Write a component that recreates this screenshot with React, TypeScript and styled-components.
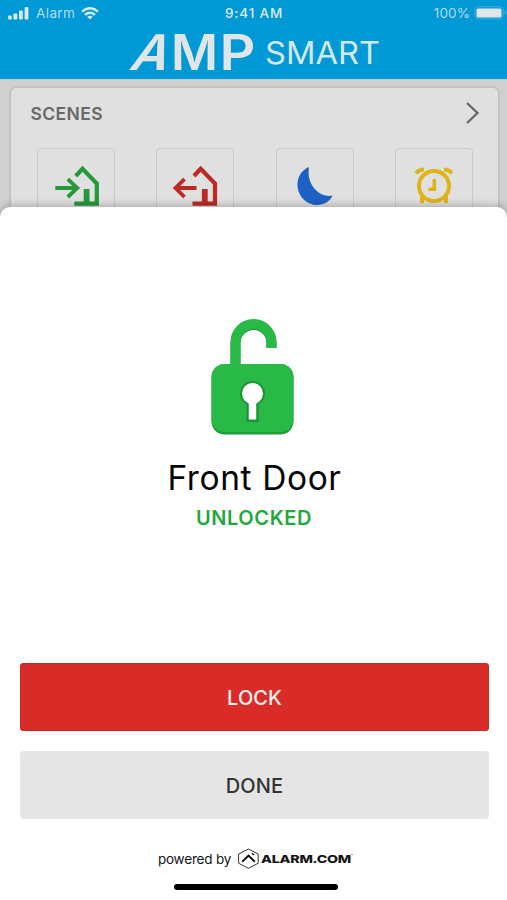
import React from "react";
import styled, { createGlobalStyle } from "styled-components";

const GlobalStyle = createGlobalStyle`
  * { box-sizing: border-box; }
  body { margin: 0; background: #d1d0cf; }
  button { border: 0; padding: 0; font: inherit; }
  svg { display: block; flex: none; }
`;

const Screen = styled.main`
  position: relative;
  width: 507px;
  height: 900px;
  overflow: hidden;
  display: flex;
  flex-direction: column;
  background: #d1d0cf;
  font-family: Inter, "Liberation Sans", sans-serif;
`;

const Header = styled.header`
  height: 80px;
  flex: none;
  background: #0099d6;
  border-bottom: 1px solid #a9cfda;
`;

const StatusBar = styled.div`
  height: 26px;
  padding: 0 0 0 8px;
  display: grid;
  grid-template-columns: 217px 1fr auto;
  align-items: center;
  color: #d9eaf1;
  font-size: 13.5px;
`;

const StatusGroup = styled.div`
  display: flex;
  align-items: center;
`;

const Carrier = styled.span`
  margin: 0 6px 0 7px;
  letter-spacing: 0.4px;
  color: #b5dceb;
`;

const Clock = styled.span`
  font-weight: 500;
  font-size: 13.5px;
  letter-spacing: 0.85px;
`;

const Percent = styled.span`
  margin-right: 4px;
  color: #b5dceb;
  letter-spacing: 0.1px;
`;

const Brand = styled.div`
  padding-left: 127px;
`;

const ScenesCard = styled.section`
  margin: 8px 9px 0 11px;
  height: 150px;
  border-radius: 5px 5px 0 0;
  background: #e0e0e0;
  box-shadow: 0 0 3px rgba(0, 0, 0, 0.25);
`;

const ScenesHead = styled.div`
  height: 50px;
  padding: 0 18px 0 19.5px;
  display: flex;
  align-items: center;
  justify-content: space-between;
`;

const ScenesTitle = styled.h2`
  margin: 0;
  color: #686868;
  font-size: 17.5px;
  font-weight: 600;
  letter-spacing: 0.4px;
`;

const SceneRow = styled.div`
  padding: 10px 25px 0 25.5px;
  display: flex;
  justify-content: space-between;
`;

const SceneTile = styled.div`
  width: 78px;
  height: 78px;
  padding-top: 13px;
  display: flex;
  justify-content: center;
  border: 1px solid #cacaca;
  border-radius: 4px;
`;

const Sheet = styled.section`
  position: absolute;
  inset: 207px 0 0;
  padding: 110px 18px 0 20px;
  display: flex;
  flex-direction: column;
  align-items: center;
  background: #fff;
  border-radius: 10px 10px 0 0;
  box-shadow: 0 -1px 9px rgba(0, 0, 0, 0.28);
`;

const DeviceName = styled.h1`
  margin: 20px 0 0;
  height: 43px;
  line-height: 43px;
  font-size: 33.5px;
  font-weight: 400;
  letter-spacing: 0.6px;
  color: #060606;
`;

const DeviceState = styled.div`
  margin-top: 6px;
  height: 25px;
  line-height: 25px;
  font-size: 20px;
  font-weight: 600;
  letter-spacing: 0.6px;
  padding-right: 1px;
  color: #23a841;
`;

const Actions = styled.div`
  width: 100%;
  margin-top: 132px;
  display: flex;
  flex-direction: column;
  gap: 20px;
`;

const Action = styled.button<{ $danger?: boolean }>`
  height: 68px;
  padding-top: 1px;
  border-radius: 4px;
  font-size: 20px;
  font-weight: 500;
  letter-spacing: 0.1px;
  color: ${(p) => (p.$danger ? "#fff1ef" : "#333")};
  background: ${(p) => (p.$danger ? "#d92c28" : "#e5e5e5")};
  box-shadow: ${(p) => (p.$danger ? "inset 0 0 1px 1px #cc2926" : "none")};
`;

const Powered = styled.footer`
  margin-top: 28px;
  height: 24px;
  display: flex;
  align-items: center;
  gap: 6px;
  padding-left: 4px;
  font-size: 13.5px;
  letter-spacing: -0.2px;
  color: #161616;
`;

const HomeBar = styled.div`
  width: 164px;
  height: 6px;
  margin: 13px 0 0 2px;
  border-radius: 3px;
  background: #000;
`;

const Signal = () => (
  <svg width="21" height="13" viewBox="0 0 21 13" fill="#d9eaf1">
    <rect x="0" y="8.5" width="3.8" height="4" rx="1" />
    <rect x="5.5" y="6.5" width="3.8" height="6" rx="1" />
    <rect x="11" y="3.5" width="3.8" height="9" rx="1" />
    <rect x="16.6" y="0" width="3.8" height="12.5" rx="1" />
  </svg>
);

const Wifi = () => (
  <svg width="18" height="13" viewBox="0 0 18 13" fill="none" stroke="#d9eaf1" strokeWidth="2.4">
    <path d="M1 4.6Q9 -2.2 17 4.6" />
    <path d="M4 7.8Q9 3.6 14 7.8" />
    <path d="M6.2 9.7Q9 7.6 11.8 9.7L9 12.4Z" fill="#d9eaf1" stroke="none" />
  </svg>
);

const Battery = () => (
  <svg width="33" height="14" viewBox="0 0 33 14">
    <rect x="0.7" y="0.7" width="28.6" height="12.2" rx="3.5" fill="none" stroke="#47aedb" />
    <rect x="2.5" y="2.4" width="25" height="9" rx="1.5" fill="#e0e5e7" />
    <path d="M31.5 4.5v4" stroke="#47aedb" strokeWidth="1.5" />
  </svg>
);

const AmpLogo = () => (
  <svg width="260" height="53" viewBox="0 0 260 53" overflow="visible" fill="#e0e5e7" fontFamily="Inter, sans-serif">
    <text transform="translate(1 44) skewX(-21)" fontSize="49" fontWeight="600" textLength="37" lengthAdjust="spacingAndGlyphs">A</text>
    <text x="44" y="44" fontSize="49" fontWeight="600" textLength="47" lengthAdjust="spacingAndGlyphs">M</text>
    <text x="92.5" y="44" fontSize="49" fontWeight="600" textLength="36" lengthAdjust="spacingAndGlyphs">P</text>
    <text x="138" y="37.5" fontSize="30.5" fontWeight="400" textLength="115" lengthAdjust="spacingAndGlyphs" fill="#d3e8f0">SMART</text>
  </svg>
);

const Chevron = () => (
  <svg width="14" height="24" viewBox="0 0 14 24" fill="none" stroke="#666" strokeWidth="2.3">
    <path d="M1 2l10.5 10L1 22" />
  </svg>
);

const HouseIcon = ({ away }: { away?: boolean }) => (
  <svg width="46" height="48" viewBox={away ? "0 0 46 48" : "-0.8 0 46 48"} overflow="visible" fill="none" stroke={away ? "#bd2a25" : "#26983c"} strokeWidth="4.2">
    <path d="M22 14l6.7-7.2L43 21.5v20.2H20.5" />
    <path d="M32.8 42V27" strokeWidth="5.8" />
    {away ? (
      <path d="M24.5 26H3M12.5 17.2L3.5 26l9 9" strokeWidth="3.8" />
    ) : (
      <path d="M1.5 26H23M14 17.2l9.5 8.8-9.5 9" strokeWidth="3.8" />
    )}
  </svg>
);

const Moon = () => (
  <svg width="38" height="48" viewBox="0 0 38 48" fill="#1c61c3">
    <path d="M13 5C4.5 8.5 1 16.5 1.5 24.5 2.5 35 11 43 21 43c7.2 0 13-3.5 15.7-9.4-6 1.2-12.3-.9-16.7-5.4C14 22.5 11.5 14.2 13 5z" />
  </svg>
);

const Alarm = () => (
  <svg width="40" height="48" viewBox="0 0 40 48" fill="none" stroke="#dfb318" strokeWidth="4">
    <circle cx="20" cy="24" r="15" />
    <path d="M20.3 17v10.2h-5.8" strokeWidth="3.6" />
    <path d="M8 34v7M32 34v7" />
    <path d="M2.2 11.5C4 8.5 6.5 7.4 10 7.4M37.8 11.5C36 8.5 33.5 7.4 30 7.4" strokeWidth="4" />
  </svg>
);

const OpenLock = () => (
  <svg width="88.4" height="120" viewBox="0 0 88.4 120">
    <path d="M25.5 51V26a18 18 0 0 1 36 0v5" fill="none" stroke="#199034" strokeWidth="10" />
    <path d="M25.5 51V25a18 18 0 0 1 36 0v6" fill="none" stroke="#28b947" strokeWidth="10" />
    <rect x="1.5" y="47" width="82" height="70.5" rx="13" fill="#1d9c39" />
    <rect x="1.5" y="47" width="82" height="68" rx="13" fill="#28b947" />
    <path d="M42.5 77v28" stroke="#1b9235" strokeWidth="12" />
    <circle cx="42.5" cy="76.5" r="12.5" fill="#1b9235" />
    <path d="M42.5 77v25.5" stroke="#fff" strokeWidth="7.5" />
    <circle cx="42.5" cy="76.5" r="10.5" fill="#fff" />
  </svg>
);

const AlarmLogo = () => (
  <svg width="118" height="24" viewBox="0 0 118 24">
    <path d="M11.5 2L21.2 7v9.2l-9.7 5.2-9.9-5.2V7z" fill="none" stroke="#333" strokeWidth="1" strokeLinejoin="round" />
    <path d="M5.2 14.8l6.3-6.2 6.3 6.2" fill="none" stroke="#111" strokeWidth="2" />
    <path d="M14.8 6.3l2.2 1.7" stroke="#111" strokeWidth="1.4" />
    <text x="24" y="15.5" fontWeight="800" fontSize="11" textLength="90" lengthAdjust="spacingAndGlyphs" fill="#161616" fontFamily="Inter, sans-serif">ALARM.COM</text>
    <circle cx="115" cy="7.5" r="0.7" fill="#777" />
  </svg>
);

export default function App() {
  return (
    <>
      <GlobalStyle />
      <Screen>
        <Header>
          <StatusBar>
            <StatusGroup>
              <Signal />
              <Carrier>Alarm</Carrier>
              <Wifi />
            </StatusGroup>
            <Clock>9:41 AM</Clock>
            <StatusGroup>
              <Percent>100%</Percent>
              <Battery />
            </StatusGroup>
          </StatusBar>
          <Brand>
            <AmpLogo />
          </Brand>
        </Header>
        <ScenesCard>
          <ScenesHead>
            <ScenesTitle>SCENES</ScenesTitle>
            <Chevron />
          </ScenesHead>
          <SceneRow>
            <SceneTile><HouseIcon /></SceneTile>
            <SceneTile><HouseIcon away /></SceneTile>
            <SceneTile><Moon /></SceneTile>
            <SceneTile><Alarm /></SceneTile>
          </SceneRow>
        </ScenesCard>
        <Sheet>
          <OpenLock />
          <DeviceName>Front Door</DeviceName>
          <DeviceState>UNLOCKED</DeviceState>
          <Actions>
            <Action $danger>LOCK</Action>
            <Action>DONE</Action>
          </Actions>
          <Powered>
            <span>powered by</span>
            <AlarmLogo />
          </Powered>
          <HomeBar />
        </Sheet>
      </Screen>
    </>
  );
}
